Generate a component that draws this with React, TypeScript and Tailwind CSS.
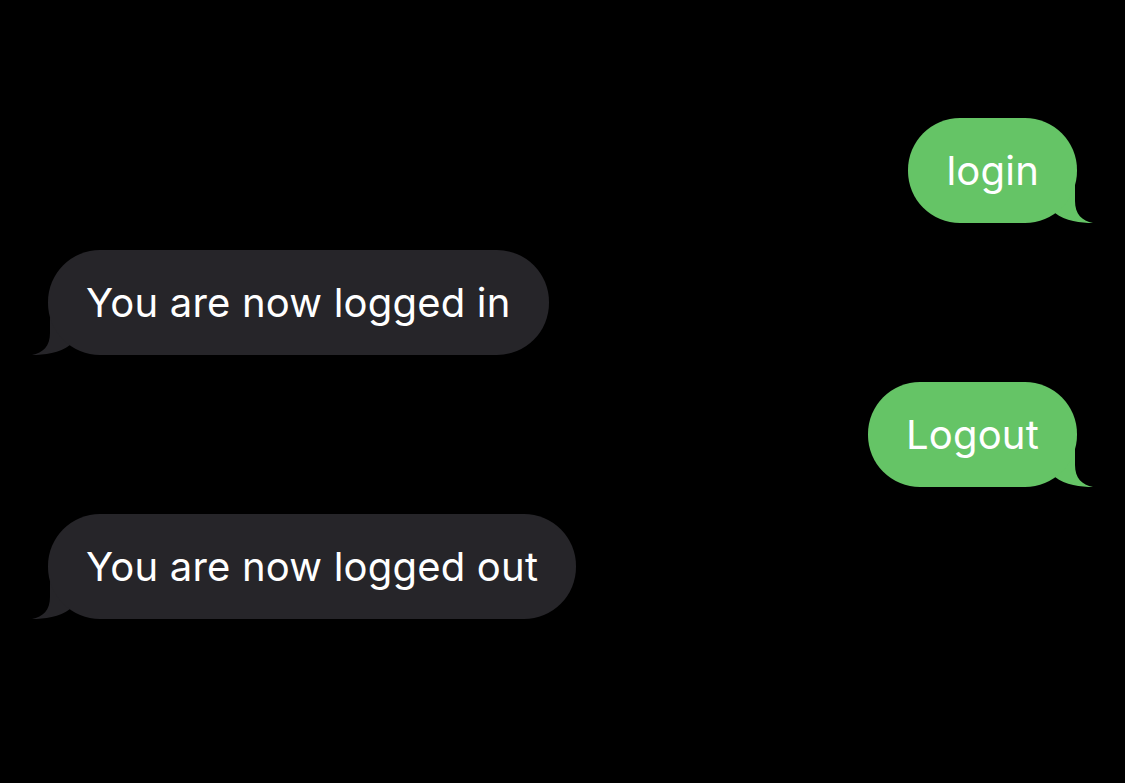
const messages = [
  { id: 1, text: 'login', mine: true },
  { id: 2, text: 'You are now logged in', mine: false },
  { id: 3, text: 'Logout', mine: true },
  { id: 4, text: 'You are now logged out', mine: false },
];

function Tail({ mine, color }: { mine: boolean; color: string }) {
  return (
    <svg
      width="50"
      height="52"
      viewBox="0 0 50 52"
      className={mine ? 'absolute bottom-0 -right-[16px]' : 'absolute bottom-0 -left-[16px] -scale-x-100'}
      fill={color}
    >
      <path d="M32 0 L32 30 C32 43 39 50 50 52 C38 52 22 50 12 42 L4 30 L0 0 Z" />
    </svg>
  );
}

function Bubble({ text, mine }: { text: string; mine: boolean }) {
  const color = mine ? '#65c466' : '#262529';
  return (
    <div className={mine ? 'relative self-end' : 'relative self-start'}>
      <div
        className={`relative z-10 flex h-[105px] items-center rounded-[52px] px-[38px] text-[40px] tracking-[0.2px] text-white ${
          mine ? 'bg-[#65c466]' : 'bg-[#262529]'
        }`}
      >
        {text}
      </div>
      <Tail mine={mine} color={color} />
    </div>
  );
}

export default function App() {
  return (
    <div
      className="flex min-h-[783px] w-full flex-col gap-[27px] bg-black px-[48px] pt-[118px]"
      style={{ fontFamily: 'Inter, "Noto Sans", sans-serif' }}
    >
      {messages.map((m) => (
        <Bubble key={m.id} text={m.text} mine={m.mine} />
      ))}
    </div>
  );
}
